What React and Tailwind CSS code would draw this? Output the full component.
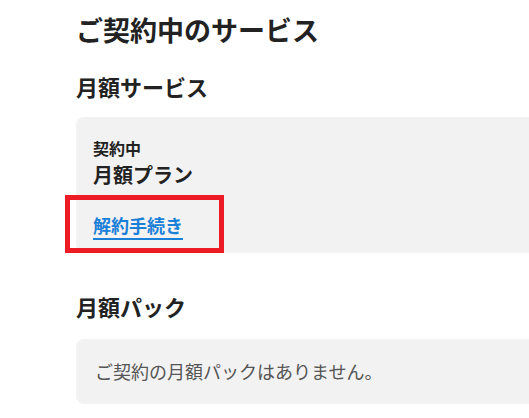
export default function App() {
  return (
    <div className="relative min-h-screen bg-white overflow-hidden font-['Noto_Sans_CJK_JP','Noto_Sans',sans-serif] text-[#222]">
      <div className="pl-[76px] pt-[12px] pb-8">
        <h1 className="text-[27px] leading-[36px] font-bold">ご契約中のサービス</h1>

        {/* 月額サービス */}
        <h2 className="mt-[23px] text-[22px] leading-[30px] font-bold">月額サービス</h2>
        <div className="mt-[16px] w-[600px] rounded-lg bg-[#f2f2f2] pl-[17px] pt-[21px] pb-[15px]">
          <p className="text-[16px] leading-[20px] font-bold">契約中</p>
          <p className="mt-[3px] text-[20px] leading-[28px] font-bold">月額プラン</p>
          <a
            href="#"
            className="mt-[23px] inline-block text-[18px] leading-[26px] font-bold text-[#1a7fd6] underline decoration-[1.5px] underline-offset-[5px]"
          >
            解約手続き
          </a>
        </div>

        {/* 月額パック */}
        <h2 className="mt-[38px] text-[22px] leading-[30px] font-bold">月額パック</h2>
        <div className="mt-[18px] w-[600px] h-[65px] rounded-lg bg-[#f2f2f2] pl-[19px] flex items-center">
          <p className="text-[18px] text-[#555]">ご契約の月額パックはありません。</p>
        </div>
      </div>

      {/* highlight annotation */}
      <div className="absolute left-[65px] top-[195px] w-[159px] h-[58px] border-[5px] border-[#ed1c24]" />
    </div>
  )
}
